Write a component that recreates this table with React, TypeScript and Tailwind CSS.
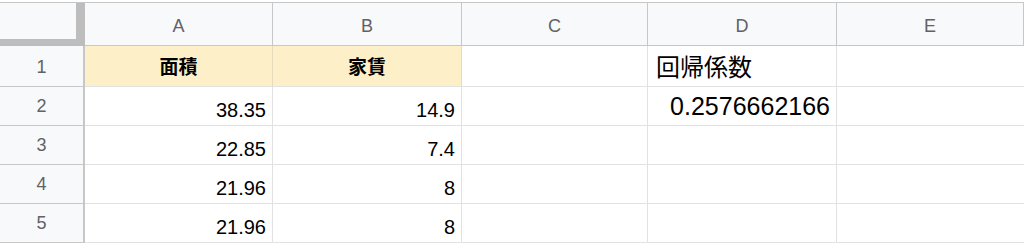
const font = "font-['Liberation_Sans','Noto_Sans_CJK_JP',sans-serif]";

type Row = {
  n: number;
  a: string;
  b: string;
  d?: string;
  head?: boolean;
};

const rows: Row[] = [
  { n: 1, a: "面積", b: "家賃", d: "回帰係数", head: true },
  { n: 2, a: "38.35", b: "14.9", d: "0.2576662166" },
  { n: 3, a: "22.85", b: "7.4" },
  { n: 4, a: "21.96", b: "8" },
  { n: 5, a: "21.96", b: "8" },
];

const cols = [
  { key: "A", w: "w-[188px]" },
  { key: "B", w: "w-[189px]" },
  { key: "C", w: "w-[186px]" },
  { key: "D", w: "w-[189px]" },
  { key: "E", w: "flex-1" },
];

function ColHeader({ label, w }: { label: string; w: string }) {
  return (
    <div
      className={`${w} flex h-full items-center justify-center border-r border-[#c7c7c7] pt-[3px] text-[18px] leading-[18px] text-[#5f6368]`}
    >
      {label}
    </div>
  );
}

function NumCell({ w, value }: { w: string; value: string }) {
  return (
    <div
      className={`${w} flex h-full items-end justify-end border-r border-[#e2e2e2] pb-[5px] pr-[6px] text-[20px] leading-[20px] text-black`}
    >
      {value}
    </div>
  );
}

export default function App() {
  return (
    <div className={`${font} h-[244px] w-[1024px] overflow-hidden bg-white pt-[2px]`}>
      <div className="border-t border-[#c7c7c7]">
        {/* column header row */}
        <div className="flex h-[43px] bg-[#f8f9fa]">
          <div className="h-[43px] w-[85px] bg-[#bdbdbd]">
            <div className="h-[36px] w-[76px] bg-[#f8f9fa]" />
          </div>
          <div className="flex flex-1 border-b border-[#c7c7c7]">
            {cols.map((c) => (
              <ColHeader key={c.key} label={c.key} w={c.w} />
            ))}
          </div>
        </div>

        {rows.map((r) => (
          <div
            key={r.n}
            className={`flex ${r.head ? "h-[41px]" : "h-[39px]"}`}
          >
            <div
              className={`flex w-[85px] items-center justify-center border-b border-r-2 border-[#c7c7c7] bg-[#f8f9fa] text-[18px] leading-[18px] text-[#5f6368] ${r.head ? "pt-[1px]" : ""}`}
            >
              {r.n}
            </div>
            <div className="flex flex-1 border-b border-[#e2e2e2]">
              {r.head ? (
                <>
                  <div className="flex w-[188px] items-center justify-center border-r border-[#e6dcbd] bg-[#fdf0c8] pt-[3px] text-[19px] font-bold leading-[19px] text-black">
                    {r.a}
                  </div>
                  <div className="flex w-[189px] items-center justify-center border-r border-[#e6dcbd] bg-[#fdf0c8] pt-[3px] text-[19px] font-bold leading-[19px] text-black">
                    {r.b}
                  </div>
                </>
              ) : (
                <>
                  <NumCell w="w-[188px]" value={r.a} />
                  <NumCell w="w-[189px]" value={r.b} />
                </>
              )}
              <div className="w-[186px] border-r border-[#e2e2e2]" />
              {r.head ? (
                <div className="flex w-[189px] items-center border-r border-[#e2e2e2] pl-[8px] pt-[3px] text-[24px] leading-[24px] text-black">
                  {r.d}
                </div>
              ) : r.d ? (
                <div className="flex w-[189px] items-end justify-end border-r border-[#e2e2e2] pb-[6px] pr-[6px] text-[25px] leading-[25px] text-black">
                  {r.d}
                </div>
              ) : (
                <div className="w-[189px] border-r border-[#e2e2e2]" />
              )}
              <div className="flex-1" />
            </div>
          </div>
        ))}
      </div>
    </div>
  );
}
